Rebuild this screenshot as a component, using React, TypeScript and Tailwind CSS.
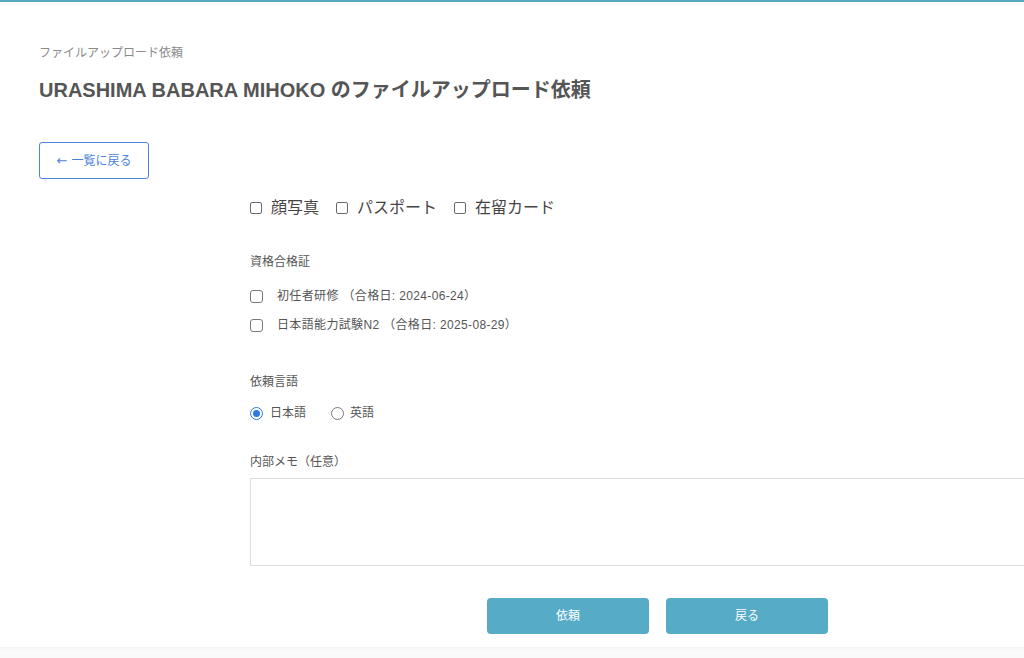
import React from 'react'

const font = { fontFamily: '"Liberation Sans", "Noto Sans CJK JP", sans-serif' }

function Box({ size = 'sm' }: { size?: 'sm' | 'md' }) {
  return (
    <span
      className={
        size === 'sm'
          ? 'inline-block h-[12px] w-[12px] shrink-0 rounded-[2px] border border-[#6b6b6b] bg-white'
          : 'inline-block h-[13px] w-[13px] shrink-0 rounded-[3px] border border-[#7a7a7a] bg-white'
      }
    />
  )
}

function Radio({ checked }: { checked?: boolean }) {
  if (checked) {
    return (
      <span className="flex h-[13px] w-[13px] shrink-0 items-center justify-center rounded-full border border-[#2f78e4] bg-white">
        <span className="h-[7px] w-[7px] rounded-full bg-[#2f78e4]" />
      </span>
    )
  }
  return <span className="inline-block h-[13px] w-[13px] shrink-0 rounded-full border border-[#7a7a7a] bg-white" />
}

export default function App() {
  const docs = ['顔写真', 'パスポート', '在留カード']
  const certs = ['初任者研修 （合格日: 2024-06-24）', '日本語能力試験N2 （合格日: 2025-08-29）']

  return (
    <div className="min-h-[658px] w-[1024px] overflow-hidden bg-[#fafafa]" style={font}>
      <div className="h-[2px] bg-[#58adc4]" />

      {/* カード */}
      <div className="w-[1200px] bg-white pb-[13px] pl-[39px] shadow-[0_0_3px_rgba(0,0,0,0.08)]">
        <p className="pt-[42px] text-[12px] leading-[18px] text-[#8a8a8a]">ファイルアップロード依頼</p>
        <h1 className="mt-[14px] text-[20px] font-bold leading-[28px] text-[#555]">
          URASHIMA BABARA MIHOKO のファイルアップロード依頼
        </h1>

        <button className="mt-[38px] flex h-[37px] w-[110px] items-center justify-center gap-[4px] rounded-[3px] border border-[#4f84e2] bg-white text-[12px] text-[#4a7fdf]">
          <span className="text-[13px] leading-none" style={{ fontFamily: '"DejaVu Sans", sans-serif' }}>←</span>
          <span>一覧に戻る</span>
        </button>

        <div className="ml-[211px] w-[815px]">
          {/* 書類 */}
          <div className="mt-[17px] flex h-[24px] items-center text-[16px] text-[#444]">
            {docs.map((d) => (
              <label key={d} className="mr-[17px] flex items-center gap-[9px]">
                <Box />
                <span>{d}</span>
              </label>
            ))}
          </div>

          <p className="mt-[33px] text-[12px] leading-[18px] text-[#555]">資格合格証</p>
          <div className="mt-[15px] flex flex-col gap-[9px]">
            {certs.map((c) => (
              <label key={c} className="flex h-[20px] items-center gap-[14px] text-[12px] tracking-[0.35px] text-[#555]">
                <Box size="md" />
                <span>{c}</span>
              </label>
            ))}
          </div>

          <p className="mt-[38px] text-[12px] leading-[18px] text-[#555]">依頼言語</p>
          <div className="mt-[12px] flex h-[20px] items-center text-[12px] text-[#555]">
            <label className="flex items-center gap-[7px]">
              <Radio checked />
              <span>日本語</span>
            </label>
            <label className="ml-[25px] flex items-center gap-[6px]">
              <Radio />
              <span>英語</span>
            </label>
          </div>

          <p className="mt-[30px] text-[12px] leading-[18px] text-[#555]">内部メモ（任意）</p>
          <textarea className="mt-[7px] block h-[88px] w-full resize-none border border-[#dcdcdc] bg-white" />

          <div className="mt-[32px] flex justify-center gap-[17px]">
            <button className="h-[36px] w-[162px] rounded-[4px] bg-[#56abc7] text-[12px] text-white">依頼</button>
            <button className="h-[36px] w-[162px] rounded-[4px] bg-[#56abc7] text-[12px] text-white">戻る</button>
          </div>
        </div>
      </div>
    </div>
  )
}
